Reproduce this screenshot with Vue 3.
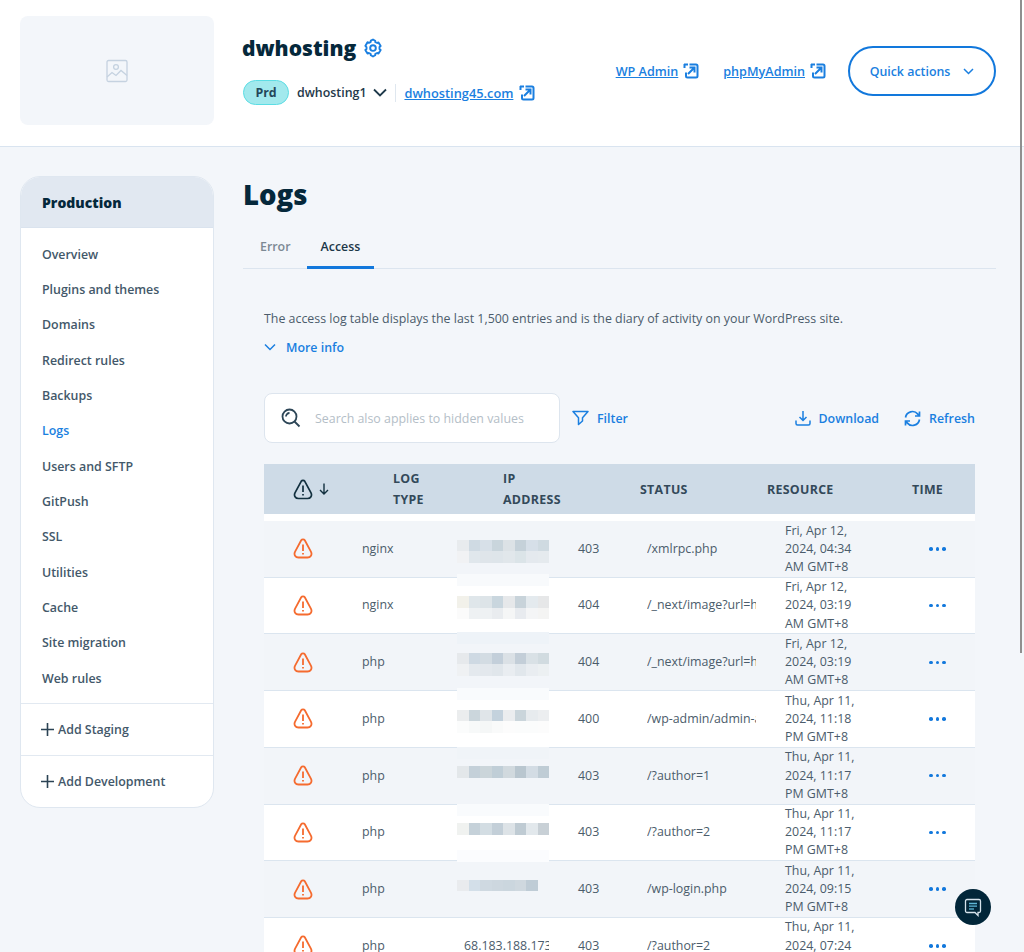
<template>
  <div class="page">
    <header class="top">
      <div class="thumb">
        <svg width="24" height="24" viewBox="0 0 24 24" fill="none" stroke="#c5d2e0" stroke-width="1.3">
          <rect x="2" y="1.5" width="20" height="21" rx="1.5" />
          <circle cx="11" cy="8" r="2.4" />
          <path d="M2 18l5-4.5 4 3 5-5 6 5" />
        </svg>
      </div>
      <div class="site">
        <div class="site-title">
          <h2>dwhosting</h2>
          <svg class="gear" width="20" height="20" viewBox="0 0 24 24" fill="none" stroke="#1a7fe0" stroke-width="2.3" stroke-linejoin="round">
            <path d="M12 1.8l2.600 1.500.3 1.800 2 .9 1.700-.7 2.600 4.400-1.400 1.200v2.200l1.400 1.200-2.600 4.400-1.700-.7-2 .9-.3 1.800-2.600 1.500-2.600-1.500-.3-1.800-2-.9-1.700.7-2.600-4.400 1.400-1.200v-2.200L2.800 9.500l2.600-4.400 1.700.7 2-.9.300-1.800z" />
            <circle cx="12" cy="12" r="3.4" />
          </svg>
        </div>
        <div class="site-env">
          <span class="pill">Prd</span>
          <span class="env-name">dwhosting1</span>
          <svg class="env-chev" width="14" height="9" viewBox="0 0 14 9" fill="none" stroke="#1f3a4b" stroke-width="1.8">
            <path d="M1 1.5l6 6 6-6" />
          </svg>
          <span class="env-sep"></span>
          <a class="link">dwhosting45.com</a>
          <svg class="ext" width="16" height="16" viewBox="0 0 16 16" fill="none" stroke="#1a7fe0" stroke-width="2">
            <path :d="extPath" />
          </svg>
        </div>
      </div>
      <div class="top-actions">
        <a class="link strong">WP Admin</a>
        <svg class="ext" width="16" height="16" viewBox="0 0 16 16" fill="none" stroke="#1a7fe0" stroke-width="2">
          <path :d="extPath" />
        </svg>
        <a class="link strong second">phpMyAdmin</a>
        <svg class="ext" width="16" height="16" viewBox="0 0 16 16" fill="none" stroke="#1a7fe0" stroke-width="2">
          <path :d="extPath" />
        </svg>
        <button class="quick">
          Quick actions
          <svg width="11" height="7" viewBox="0 0 11 7" fill="none" stroke="#1a7fe0" stroke-width="1.5">
            <path d="M1 1l4.500 4.500L10 1" />
          </svg>
        </button>
      </div>
    </header>

    <main class="main">
      <aside class="side">
        <div class="side-head">Production</div>
        <nav class="side-nav">
          <a v-for="item in nav" :key="item" :class="{ active: item === 'Logs' }">{{ item }}</a>
        </nav>
        <div class="side-add">
          <svg width="13" height="13" viewBox="0 0 13 13" fill="none" stroke="#2b4354" stroke-width="1.6">
            <path d="M6.500 0v13M0 6.500h13" />
          </svg>
          Add Staging
        </div>
        <div class="side-add">
          <svg width="13" height="13" viewBox="0 0 13 13" fill="none" stroke="#2b4354" stroke-width="1.6">
            <path d="M6.500 0v13M0 6.500h13" />
          </svg>
          Add Development
        </div>
      </aside>

      <section class="content">
        <h1>Logs</h1>
        <div class="tabs">
          <span class="tab">Error</span>
          <span class="tab current">Access</span>
        </div>
        <div class="inner">
          <p class="intro">The access log table displays the last 1,500 entries and is the diary of activity on your WordPress site.</p>
          <div class="more">
            <svg width="12" height="8" viewBox="0 0 12 8" fill="none" stroke="#1a7fe0" stroke-width="1.5">
              <path d="M1 1.500l5 5 5-5" />
            </svg>
            More info
          </div>

          <div class="toolbar">
            <div class="search">
              <svg width="20" height="20" viewBox="0 0 20 20" fill="none" stroke="#2d4657" stroke-width="1.8">
                <circle cx="8.500" cy="8.500" r="7" />
                <path d="M5 8.500a3.500 3.500 0 0 1 3.500-3.500M13.500 13.500l5 5" />
              </svg>
              <span class="placeholder">Search also applies to hidden values</span>
            </div>
            <div class="tool filter">
              <svg width="17" height="16" viewBox="0 0 17 16" fill="none" stroke="#1a7fe0" stroke-width="1.5" stroke-linejoin="round">
                <path d="M1 1.500h15l-5.500 6.200v3.300l-4 3.500V7.700z" />
              </svg>
              Filter
            </div>
            <div class="tool-right">
              <div class="tool">
                <svg width="16" height="16" viewBox="0 0 16 16" fill="none" stroke="#1a7fe0" stroke-width="1.5">
                  <path d="M8 1v9.500M4.500 7L8 10.500 11.500 7M1 10.500v3a1.500 1.500 0 0 0 1.500 1.500h11a1.500 1.500 0 0 0 1.500-1.500v-3" />
                </svg>
                Download
              </div>
              <div class="tool">
                <svg width="17" height="17" viewBox="0 0 17 17" fill="none" stroke="#1a7fe0" stroke-width="1.7">
                  <path d="M1.500 7.500a7 7 0 0 1 12.300-3.400l1.700 1.900M15.500 1.500V6H11M15.500 9.500a7 7 0 0 1-12.300 3.400L1.500 11M1.500 15.500V11H6" />
                </svg>
                Refresh
              </div>
            </div>
          </div>

          <div class="thead">
            <div class="th-icon">
              <svg width="20" height="21" viewBox="0 0 20 21" fill="none" stroke="#12303f" stroke-width="1.7">
                <path :d="warnPath" />
                <path d="M10 6.500v6.500M10 15v1.500" />
              </svg>
              <svg width="10" height="12" viewBox="0 0 10 12" fill="none" stroke="#12303f" stroke-width="1.4">
                <path d="M5 .5v10.500M1 7l4 4 4-4" />
              </svg>
            </div>
            <div class="th">LOG TYPE</div>
            <div class="th">IP ADDRESS</div>
            <div class="th">STATUS</div>
            <div class="th">RESOURCE</div>
            <div class="th">TIME</div>
          </div>

          <div class="tbody">
            <div v-for="(row, i) in rows" :key="i" class="row">
              <div class="cell-icon">
                <svg width="20" height="21" viewBox="0 0 20 21" fill="none" stroke="#f56b2f" stroke-width="1.8">
                  <path :d="warnPath" />
                  <path d="M10 6.500v6.500M10 15v1.500" />
                </svg>
              </div>
              <div>{{ row.type }}</div>
              <div class="ip">{{ row.ip }}</div>
              <div>{{ row.status }}</div>
              <div class="res">{{ row.resource }}</div>
              <div class="time">{{ row.time }}</div>
              <div class="dots"><i></i><i></i><i></i></div>

              <div v-if="row.mosaic" class="mosaic">
                <div v-for="(line, l) in row.mosaic" :key="l" class="mosaic-line">
                  <span v-for="(c, k) in line" :key="k" :style="{ background: c }"></span>
                </div>
              </div>
              <div v-if="row.strip" class="strip" :style="{ top: row.strip.top + 'px', background: row.strip.color }"></div>
            </div>
          </div>
        </div>
      </section>
    </main>

    <button class="chat">
      <svg width="18" height="19" viewBox="0 0 18 19" fill="none" stroke="#d6e3ec" stroke-width="1.3">
        <path d="M3 1.500h12a1.500 1.500 0 0 1 1.500 1.500v10a1.500 1.500 0 0 1-1.500 1.500h-1v3l-3-3H3A1.500 1.500 0 0 1 1.500 13V3A1.500 1.500 0 0 1 3 1.500z" />
        <path d="M5 5.500h8M5 8.200h8" stroke="#5fb6d6" />
        <path d="M5 11h5" stroke="#5fb6d6" />
      </svg>
    </button>
    <div class="scrollbar"></div>
  </div>
</template>

<script setup>
const extPath = 'M6.500 1.500h6.500a1.500 1.500 0 0 1 1.500 1.500v10a1.500 1.500 0 0 1-1.500 1.500H4.500A1.500 1.500 0 0 1 3 13V9.500M1 1.500h4M1.500 1v4M5 11l6.500-6.500M6.500 4.500h5v5'

const warnPath = 'M8.200 2.300a2.100 2.100 0 0 1 3.600 0l6.100 11.400c1.600 3-.3 5.800-3.400 5.800H5.500c-3.100 0-5-2.800-3.400-5.800z'

const nav = [
  'Overview',
  'Plugins and themes',
  'Domains',
  'Redirect rules',
  'Backups',
  'Logs',
  'Users and SFTP',
  'GitPush',
  'SSL',
  'Utilities',
  'Cache',
  'Site migration',
  'Web rules',
]

const rows = [
  {
    type: 'nginx', status: 403, resource: '/xmlrpc.php', time: 'Fri, Apr 12, 2024, 04:34 AM GMT+8',
    mosaic: [
      ['#e8ebee', '#cfdae3', '#d7e0e8', '#c9d5dc', '#dce2e6', '#c5d1d9', '#d6dfe8', '#cfdae1'],
      ['#f1f2f4', '#e0e7ec', '#dfe5ea', '#dee5ea', '#e1e7eb', '#dbe4e8', '#e4e9ee', '#e5eaee'],
    ],
    strip: { top: 53, color: '#f8fafc' },
  },
  {
    type: 'nginx', status: 404, resource: '/_next/image?url=https', time: 'Fri, Apr 12, 2024, 03:19 AM GMT+8',
    mosaic: [
      ['#f2f1ea', '#dfe6ea', '#dde4e8', '#c9d6de', '#e6e8ea', '#c8d3da', '#e4eaee', '#e6e7e8'],
      ['#fbfbfb', '#eef1f3', '#eef1f3', '#e9ecef', '#f5f6f6', '#e8ebef', '#f4f5f6', '#f4f4f3'],
    ],
    strip: { top: 54, color: '#eef3f8' },
  },
  {
    type: 'php', status: 404, resource: '/_next/image?url=https', time: 'Fri, Apr 12, 2024, 03:19 AM GMT+8',
    mosaic: [
      ['#e6e9ec', '#ced9e3', '#d3dce3', '#c3cfda', '#dbe1e6', '#c3ced8', '#d9e1e6', '#d1dbe0'],
      ['#eff1f3', '#e4e9ee', '#e3e8ed', '#e0e6eb', '#e9edf1', '#e1e7ec', '#e9edf1', '#ecf0f2'],
    ],
    strip: { top: 54, color: '#f9fbfd' },
  },
  {
    type: 'php', status: 400, resource: '/wp-admin/admin-ajax.php', time: 'Thu, Apr 11, 2024, 11:18 PM GMT+8',
    mosaic: [
      ['#ebedee', '#cbd6dc', '#e0e5e9', '#c4d2dd', '#ebedef', '#cad5db', '#e7ebee', '#eceef0'],
      ['#fbfcfc', '#f7f9f9', '#f5f7f7', '#f9fafa', '#fcfcfc', '#fbfcfc', '#fbfcfc', '#fcfcfc'],
    ],
    strip: { top: 56, color: '#f0f4f8' },
  },
  {
    type: 'php', status: 403, resource: '/?author=1', time: 'Thu, Apr 11, 2024, 11:17 PM GMT+8',
    mosaic: [['#e3e7ea', '#c4d0d9', '#cbd5da', '#c0ced7', '#d1d9de', '#b9c6cf', '#d3dce4', '#bfccd5']],
    strip: { top: 56, color: '#f9fbfd' },
  },
  {
    type: 'php', status: 403, resource: '/?author=2', time: 'Thu, Apr 11, 2024, 11:17 PM GMT+8',
    mosaic: [['#f0f2f0', '#c5d1d9', '#d3dde3', '#c3cfd8', '#dde3e7', '#bfcbd3', '#e2e8ec', '#c8d0d6']],
    strip: { top: 45, color: '#fbfcfe' },
  },
  {
    type: 'php', status: 403, resource: '/wp-login.php', time: 'Thu, Apr 11, 2024, 09:15 PM GMT+8',
    mosaic: [['#e9ebee', '#d3dfe9', '#cfd9e1', '#cdd7df', '#cbd6de', '#cfd8df', '#bfccd6']],
  },
  { type: 'php', ip: '68.183.188.173', status: 403, resource: '/?author=2', time: 'Thu, Apr 11, 2024, 07:24 PM GMT+8' },
]
</script>

<style>
html, body {
  height: 100%;
  overflow: hidden;
}
</style>

<style scoped>
.page {
  font-family: "Open Sans", "Liberation Sans", sans-serif;
  font-size: 12.4px;
  background: #f3f6fa;
  color: #4b5c6b;
  min-height: 952px;
}

.top {
  display: flex;
  align-items: flex-start;
  height: 147px;
  box-sizing: border-box;
  padding: 16px 28px 0 20px;
  background: #fff;
  border-bottom: 1px solid #d9e4f0;
}

.thumb {
  width: 194px;
  height: 109px;
  border-radius: 8px;
  background: #f3f6fa;
  display: flex;
  align-items: center;
  justify-content: center;
}

.site {
  margin-left: 28px;
  margin-top: 15px;
}

.site-title {
  display: flex;
  align-items: center;
  height: 32px;
  margin-top: 1px;
}

h2 {
  margin: 0;
  font-size: 21px;
  font-weight: 800;
  color: #05283b;
}

.gear {
  margin-left: 7px;
}

.site-env {
  display: flex;
  align-items: center;
  margin-top: 16px;
  height: 25px;
  margin-left: 1px;
}

.pill {
  width: 46px;
  height: 25px;
  box-sizing: border-box;
  display: flex;
  align-items: center;
  justify-content: center;
  border-radius: 13px;
  background: #a2e9ed;
  border: 1px solid #5cdde4;
  font-weight: 700;
  color: #24475a;
}

.env-name {
  margin-left: 8px;
  font-weight: 600;
  color: #24394a;
}

.env-chev {
  margin-left: 7px;
}

.env-sep {
  width: 1px;
  height: 18px;
  margin: 0 8px;
  background: #dfe7ef;
}

.link {
  font-size: 12.6px;
  color: #1a7fe0;
  text-decoration: underline;
}

.site-env .link {
  font-size: 12.8px;
  font-weight: 600;
}

.site-env .ext {
  margin-left: 6px;
}

.link.strong {
  font-weight: 600;
}

.link.second {
  margin-left: 24px;
}

.ext {
  margin-left: 5px;
  flex: none;
}

.top-actions {
  display: flex;
  align-items: center;
  margin-left: auto;
  margin-top: 30px;
  height: 50px;
}

.quick {
  width: 148px;
  height: 50px;
  margin-left: 22px;
  display: flex;
  align-items: center;
  justify-content: center;
  gap: 13px;
  background: #fff;
  border: 2px solid #1278dc;
  border-radius: 25px;
  font: 600 12.4px "Open Sans", sans-serif;
  color: #1a7fe0;
}

.main {
  display: flex;
  align-items: flex-start;
  padding: 29px 28px 0 20px;
}

.side {
  width: 194px;
  flex: none;
  box-sizing: border-box;
  background: #fff;
  border: 1px solid #dfe7f0;
  border-radius: 20px;
  overflow: hidden;
}

.side-head {
  height: 50px;
  display: flex;
  align-items: center;
  padding-left: 21px;
  background: #e1e8f1;
  font-size: 14px;
  font-weight: 800;
  color: #05283b;
  border-bottom: 1px solid #dae3ee;
}

.side-nav {
  display: flex;
  flex-direction: column;
  padding: 8.500px 0 7.500px;
}

.side-nav a {
  height: 35.33px;
  display: flex;
  align-items: center;
  padding-left: 21px;
  font-weight: 600;
  color: #43586a;
}

.side-nav a.active {
  color: #1a7fe0;
}

.side-add {
  height: 51px;
  border-top: 1px solid #e2e9f1;
  display: flex;
  align-items: center;
  gap: 4px;
  padding-left: 20px;
  font-weight: 600;
  color: #43586a;
}

.content {
  margin-left: 29px;
  width: 753px;
  flex: none;
}

h1 {
  margin: 0;
  height: 38px;
  line-height: 38px;
  font-size: 27.5px;
  font-weight: 800;
  color: #05283b;
}

.tabs {
  display: flex;
  gap: 2px;
  height: 54px;
  padding-left: 3px;
  align-items: flex-end;
  border-bottom: 1px solid #dce5ef;
}

.tab {
  padding: 0 14px 11px;
  font-weight: 600;
  color: #7c8994;
  margin-bottom: -1px;
  border-bottom: 3px solid transparent;
}

.tab.current {
  color: #1b3748;
  border-bottom-color: #1278dc;
}

.inner {
  padding: 0 21px;
}

.intro {
  margin: 41px 0 0;
  line-height: 18px;
  height: 18px;
  white-space: nowrap;
}

.more {
  display: flex;
  align-items: center;
  gap: 10px;
  margin-top: 10px;
  height: 18px;
  font-weight: 600;
  color: #1a7fe0;
}

.toolbar {
  display: flex;
  align-items: center;
  margin-top: 37px;
  height: 50px;
}

.search {
  width: 296px;
  height: 50px;
  box-sizing: border-box;
  display: flex;
  align-items: center;
  gap: 14px;
  padding-left: 16px;
  background: #fff;
  border: 1px solid #dde5ee;
  border-radius: 8px;
}

.placeholder {
  color: #b4bec7;
}

.tool {
  display: flex;
  align-items: center;
  gap: 8px;
  font-weight: 600;
  color: #1a7fe0;
}

.filter {
  margin-left: 12px;
}

.tool-right {
  margin-left: auto;
  display: flex;
  align-items: center;
  gap: 25px;
}

.thead {
  display: grid;
  grid-template-columns: 129px 110px 137px 127px 145px 63px;
  align-items: center;
  margin-top: 21px;
  height: 50px;
  background: #cedbe7;
  font-weight: 700;
  color: #33495a;
  letter-spacing: .3px;
}

.th {
  line-height: 21px;
}

.thead .th:nth-child(2) {
  width: 50px;
}

.thead .th:nth-child(3) {
  width: 70px;
}

.th-icon {
  display: flex;
  align-items: center;
  gap: 6px;
  padding-left: 29px;
}

.tbody {
  padding-top: 7px;
  background: #fff;
}

.row {
  position: relative;
  display: grid;
  grid-template-columns: 98px 95px 121px 69px 138px 114px 76px;
  align-items: center;
  height: 56.71px;
  box-sizing: border-box;
  line-height: 18.2px;
  border-bottom: 1px solid #dbe5ef;
}

.row:nth-child(odd) {
  background: #f2f5f9;
}

.row:nth-child(even) {
  background: #fff;
}

.cell-icon {
  padding-left: 29px;
  display: flex;
}

.ip {
  padding-left: 7px;
  white-space: nowrap;
  width: 92px;
  box-sizing: border-box;
  overflow: hidden;
}

.res {
  width: 109px;
  white-space: nowrap;
  overflow: hidden;
}

.time {
  width: 88px;
}

.dots {
  display: flex;
  justify-content: center;
  gap: 3px;
  padding-left: 1px;
}

.dots i {
  width: 3.5px;
  height: 3.5px;
  border-radius: 50%;
  background: #1278dc;
}

.mosaic {
  position: absolute;
  left: 193px;
  top: 18.5px;
}

.mosaic-line {
  display: flex;
  height: 11.5px;
}

.mosaic-line span {
  width: 11.5px;
  height: 11.5px;
}

.strip {
  position: absolute;
  left: 193px;
  width: 92px;
  height: 12px;
  z-index: 1;
}

.chat {
  position: fixed;
  left: 955px;
  top: 889px;
  width: 36px;
  height: 36px;
  padding: 0;
  border: 0;
  border-radius: 50%;
  background: #012639;
  display: flex;
  align-items: center;
  justify-content: center;
  z-index: 5;
}

.scrollbar {
  position: fixed;
  left: 1020px;
  top: 0;
  width: 2px;
  height: 653px;
  background: #8f8f8f;
  z-index: 6;
}
</style>
